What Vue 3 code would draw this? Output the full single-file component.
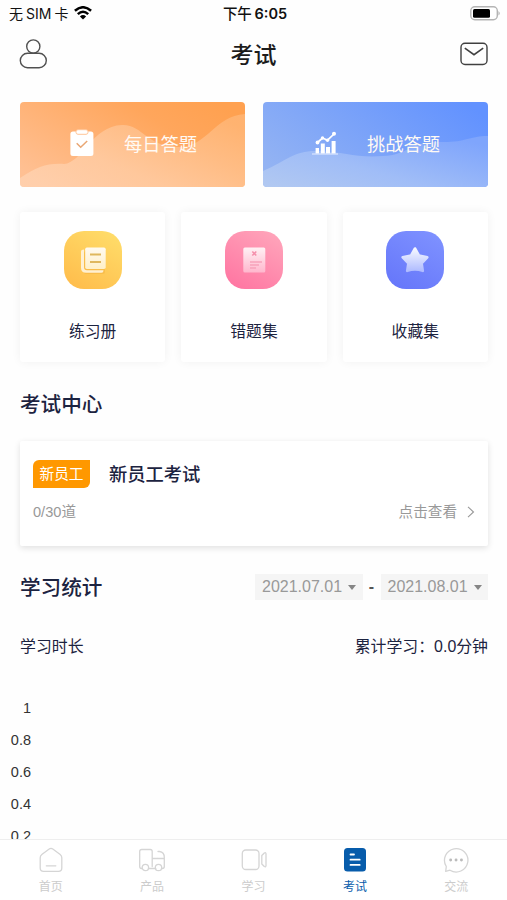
<script setup>
const axisLabels = ['1', '0.8', '0.6', '0.4', '0.2']
</script>

<template>
  <div class="screen">
    <div class="status">
      <div class="carrier">
        <span class="carrier-name">无<span class="sim">SIM</span>卡</span>
        <svg width="18" height="14" viewBox="0 0 18 14">
          <g fill="none" stroke="#000" stroke-width="2.5">
            <path d="M.9 4.8Q9-2.3 17.1 4.8" />
            <path d="M3.8 8.1Q9 3.3 14.2 8.1" />
          </g>
          <path d="M5.9 10.4Q9 7.7 12.1 10.4L9 13.5Z" fill="#000" />
        </svg>
      </div>
      <div class="clock"><span>下午</span> 6:05</div>
      <svg class="battery" width="31" height="16" viewBox="0 0 31 16">
        <rect x=".8" y=".7" width="26.500" height="13" rx="4" fill="#fff" stroke="#b4b4b4" stroke-width="1.400" />
        <rect x="3" y="2.900" width="17" height="8.800" rx="1.500" fill="#000" />
        <path d="M28.500 4.900q2.400 2.300 0 4.600z" fill="#aaa" />
      </svg>
    </div>

    <header class="header">
      <svg width="28" height="30" viewBox="0 0 28 30" fill="none" stroke="#505050" stroke-width="1.4">
        <circle cx="14.300" cy="7.500" r="6.600" />
        <rect x="1.300" y="14.300" width="26" height="14.400" rx="7.200" />
      </svg>
      <h1>考试</h1>
      <svg width="28" height="24" viewBox="0 0 28 24" fill="none" stroke="#404040" stroke-width="1.4">
        <rect x="1" y="1.300" width="26" height="21.200" rx="4" />
        <path d="M4.800 6.200 14 12.700l9.200-6.500" stroke-width="1.600" />
      </svg>
    </header>

    <main class="content">
      <section class="banners">
        <div class="banner">
          <svg class="backdrop" viewBox="0 0 225 85" preserveAspectRatio="none">
            <defs>
              <linearGradient id="orange" x1="0" y1=".8" x2="1" y2=".2">
                <stop offset="0" stop-color="#ffc093" /><stop offset=".7" stop-color="#ffa65c" /><stop offset="1" stop-color="#ffa150" />
              </linearGradient>
              <linearGradient id="orangeHill" x1="0" y1="1" x2="1" y2=".2">
                <stop offset="0" stop-color="#ffdbc0" stop-opacity=".55" /><stop offset=".4" stop-color="#ffd3b0" stop-opacity=".65" /><stop offset="1" stop-color="#ffb778" stop-opacity=".8" />
              </linearGradient>
            </defs>
            <path d="M0 0H225V85H0z" fill="url(#orange)" />
            <path d="M0 76C17 65 27 61 44 62C62 61 72 24 102 23C122 22 127 45 158 45C188 45 194 14 225 12V85H0z" fill="url(#orangeHill)" />
          </svg>
          <svg class="banner-icon" width="26" height="28" viewBox="0 0 26 28">
            <rect x="1.400" y="2.500" width="23" height="24.500" rx="2.500" fill="#fff" />
            <rect x="7" y=".7" width="12" height="4.600" rx="2" fill="#fff" stroke="#ffc598" stroke-width="1" />
            <path d="m7.700 14.200 4 4L18.200 12" fill="none" stroke="#e9a673" stroke-width="1.500" />
          </svg>
          <span class="banner-text">每日答题</span>
        </div>
        <div class="banner">
          <svg class="backdrop" viewBox="0 0 225 85" preserveAspectRatio="none">
            <defs>
              <linearGradient id="blue" x1="0" y1=".7" x2="1" y2=".2">
                <stop offset="0" stop-color="#93b3f3" /><stop offset="1" stop-color="#6292ff" />
              </linearGradient>
              <linearGradient id="blueHill" x1="0" y1="1" x2="1" y2=".2">
                <stop offset="0" stop-color="#b2c9f1" /><stop offset=".45" stop-color="#a0bdf7" /><stop offset="1" stop-color="#7fa5fc" />
              </linearGradient>
            </defs>
            <path d="M0 0H225V85H0z" fill="url(#blue)" />
            <path d="M0 69C25 58 32 48 55 49C82 50 93 56 120 54C145 53 148 39 176 40C202 41 206 34 225 34V85H0z" fill="url(#blueHill)" />
          </svg>
          <svg class="banner-icon" width="26" height="28" viewBox="0 0 26 28">
            <g fill="#fff">
              <path d="M3.600 19h3.400v5.500H3.600zM8.800 14.500h4v10h-4zM14 18h4v6.500h-4zM19.600 12h4v12.500h-4z" />
              <circle cx="5.500" cy="13.500" r="1.900" /><circle cx="10.500" cy="9" r="1.700" /><circle cx="15.500" cy="11.200" r="1.700" /><circle cx="22" cy="4.700" r="2" />
            </g>
            <path d="M5.500 13.500 10.500 9l5 2.200L22 5" fill="none" stroke="#fff" stroke-width="1.700" />
            <path d="M0 25h26" stroke="#e5edff" stroke-width="1" />
          </svg>
          <span class="banner-text">挑战答题</span>
        </div>
      </section>

      <section class="books">
        <div class="book">
          <svg width="58" height="58" viewBox="0 0 58 58">
            <defs>
              <linearGradient id="yellow" x1=".2" y1="1" x2=".8" y2="0"><stop stop-color="#ffbd4c" /><stop offset="1" stop-color="#ffdc69" /></linearGradient>
              <linearGradient id="paper" x1="0" y1="0" x2="0" y2="1"><stop stop-color="#fffaf0" /><stop offset="1" stop-color="#fff0c8" /></linearGradient>
            </defs>
            <rect width="58" height="58" rx="20" fill="url(#yellow)" />
            <rect x="20" y="20" width="21" height="23" rx="2" fill="#e99a28" opacity=".25" />
            <path d="M20 18.500q-3 .1-3 2.200v16q0 5 5 5h15.500q2 0 2-2.500H23q-3 0-3-3z" fill="#fff0d1" />
            <rect x="21.200" y="16.500" width="20.500" height="21.500" rx="1.700" fill="url(#paper)" />
            <path d="M26 23.500h11M26 31h11" stroke="#dfb75d" stroke-width="1.800" />
          </svg>
          <span>练习册</span>
        </div>
        <div class="book">
          <svg width="58" height="58" viewBox="0 0 58 58">
            <defs>
              <linearGradient id="pink" x1=".2" y1="1" x2=".8" y2="0"><stop stop-color="#ff76a2" /><stop offset="1" stop-color="#ffa4ba" /></linearGradient>
              <linearGradient id="sheet" x1="0" y1="0" x2="0" y2="1"><stop stop-color="#fff1f4" /><stop offset="1" stop-color="#ffb7cd" /></linearGradient>
            </defs>
            <rect width="58" height="58" rx="20" fill="url(#pink)" />
            <rect x="18.300" y="16.500" width="22" height="25" rx="1.500" fill="url(#sheet)" />
            <path d="m27.300 20.500 4 4m0-4-4 4" stroke="#f590ac" stroke-width="1.600" />
            <path d="M25 31h12M25 34h9M25 37h6" stroke="#f7a3bb" stroke-width="1.300" />
          </svg>
          <span>错题集</span>
        </div>
        <div class="book">
          <svg width="58" height="58" viewBox="0 0 58 58">
            <defs>
              <linearGradient id="violet" x1=".2" y1="1" x2=".8" y2="0"><stop stop-color="#6677fa" /><stop offset="1" stop-color="#7e91ff" /></linearGradient>
              <linearGradient id="star" x1="0" y1="0" x2="0" y2="1"><stop stop-color="#f6f8ff" /><stop offset="1" stop-color="#b0bcff" /></linearGradient>
            </defs>
            <rect width="58" height="58" rx="20" fill="url(#violet)" />
            <path d="m29 17.500 3.900 7 8.400 1.800-5.700 6 1.200 7.600q-4-1.500-7.800-1.500t-7.800 1.500l1.200-7.600-5.700-6 8.400-1.800z" fill="url(#star)" stroke="url(#star)" stroke-width="2.600" stroke-linejoin="round" />
          </svg>
          <span>收藏集</span>
        </div>
      </section>

      <h2 class="center-title">考试中心</h2>

      <section class="exam">
        <div class="exam-top"><span class="tag">新员工</span><h3>新员工考试</h3></div>
        <div class="exam-bottom">
          <span>0/30道</span>
          <span class="view">点击查看
            <svg width="8" height="12" viewBox="0 0 8 12" fill="none" stroke="#999" stroke-width="1.100"><path d="m1 .8 5.500 5.200L1 11.200" /></svg>
          </span>
        </div>
      </section>

      <section class="stats-head">
        <h2>学习统计</h2>
        <div class="range">
          <span class="date">2021.07.01<i></i></span>
          <b>-</b>
          <span class="date">2021.08.01<i></i></span>
        </div>
      </section>
      <section class="duration"><span>学习时长</span><span>累计学习：0.0分钟</span></section>
      <section class="axis"><span v-for="label in axisLabels" :key="label">{{ label }}</span></section>
    </main>

    <nav class="tabs">
      <div class="tab">
        <svg width="26" height="26" viewBox="0 0 26 26"><path d="M3.800 7.500 11.200 2q1.800-1.300 3.600 0l7.400 5.500q1.600 1.200 1.600 3.200V21q0 3.300-3.300 3.300h-15Q2.200 24.300 2.200 21V10.700q0-2 1.600-3.200zM8.300 18.800h9.500" /></svg>
        <span>首页</span>
      </div>
      <div class="tab">
        <svg width="26" height="26" viewBox="0 0 26 26"><path d="M3 21.500H2.500Q.7 21.500.7 19.500V4.500Q.7 2.500 2.700 2.500h8.500q2 0 2 2v15M9.700 21.500h7M13.200 11.500h5M19 4.500h1.500q4.800.5 4.800 6v9q0 2-2 2M18.500 11.500h6.800" /><circle cx="6.400" cy="20.500" r="3.200" /><circle cx="19.500" cy="20.500" r="3.200" /></svg>
        <span>产品</span>
      </div>
      <div class="tab">
        <svg width="26" height="26" viewBox="0 0 26 26"><rect x="1.300" y="3" width="16.700" height="19.500" rx="3.500" /><path d="M20.800 8.500 23.300 6q1.700-1 1.700 1v11.500q0 1.900-1.700 1l-2.500-2.500z" /></svg>
        <span>学习</span>
      </div>
      <div class="tab active">
        <svg width="26" height="26" viewBox="0 0 26 26"><rect class="solid" x="2" y="1" width="22" height="23.400" rx="3.500" /><path class="lines" d="M8.500 7.500h3.500M8.500 12.700h9.200M8.500 17.900h9.200" /></svg>
        <span>考试</span>
      </div>
      <div class="tab">
        <svg width="26" height="26" viewBox="0 0 26 26"><path d="M3.300 19.500A11.700 11.700 0 1 1 7 23.200L2.700 24.300z" /><path class="dots" d="M7.600 13h.1M13 13h.1M18.400 13h.1" /></svg>
        <span>交流</span>
      </div>
    </nav>
  </div>
</template>

<style>
body { background: #fff; overflow: hidden; }
</style>

<style scoped>
* { box-sizing: border-box; }
.screen { width: 507px; height: 900px; display: flex; flex-direction: column; overflow: hidden; background: #fefefe; color: #1c2340; font-family: "Liberation Sans", "Noto Sans CJK SC", sans-serif; font-size: 16px; }
svg { display: block; flex-shrink: 0; }
h1, h2, h3 { margin: 0; font-weight: 500; font-family: "Noto Sans CJK SC", sans-serif; }
.status { height: 27px; flex: none; display: grid; grid-template-columns: 1fr auto 1fr; align-items: center; padding: 0 6px 0 9px; color: #111; }
.carrier { display: flex; gap: 6px; align-items: center; }
.carrier svg { margin-top: -2px; }
.carrier-name { font: 14px/20px Inter, "Noto Sans CJK SC", sans-serif; white-space: nowrap; }
.sim { margin: 0 3px; }
.clock { font: 600 14.500px/20px Inter, "Noto Sans CJK SC", sans-serif; white-space: pre; }
.clock span { font-size: 14.500px; font-weight: 500; margin-right: -1px; }
.battery { justify-self: end; }
.header { height: 54px; flex: none; display: flex; align-items: center; justify-content: space-between; padding: 0 19px; }
h1 { margin-top: -3px; font-size: 23px; line-height: 32px; color: #1c1c1c; }
.content { flex: 1; min-height: 0; overflow: hidden; padding: 21px 19px 0 20px; }
.banners { display: flex; gap: 18px; height: 85px; }
.banner { position: relative; flex: 1; display: flex; align-items: center; padding: 0 0 3px 49px; border-radius: 4px; overflow: hidden; }
.backdrop { position: absolute; inset: 0; width: 100%; height: 100%; }
.banner-icon, .banner-text { position: relative; }
.banner-text { margin-left: 29px; color: #fffaf4; font: 18.300px/26px "Noto Sans CJK SC", sans-serif; }
.books { margin-top: 25px; display: flex; gap: 16px; height: 150px; }
.book { flex: 1; display: flex; flex-direction: column; align-items: center; padding-top: 19px; border-radius: 3px; background: #fff; box-shadow: 0 0 10px rgba(0, 0, 0, .055); }
.book span { margin-top: 32px; line-height: 22px; font-size: 15.800px; }
h2 { font-size: 20.600px; line-height: 30px; }
.center-title { margin-top: 26px; }
.exam { margin-top: 23px; height: 105px; padding: 18px 13px 0; background: #fff; border-radius: 2px; box-shadow: 0 2px 6px rgba(0, 0, 0, .12); }
.exam-top { display: flex; align-items: center; height: 30px; }
.tag { width: 57px; height: 28px; background: #ff9800; color: #fff; border-radius: 6px 0 6px 0; text-align: center; font-size: 14.700px; line-height: 29px; }
h3 { margin: -2px 0 0 19px; font-size: 18.300px; line-height: 26px; }
.exam-bottom { display: flex; justify-content: space-between; margin-top: 12px; line-height: 22px; font-size: 14.600px; color: #999; }
.view { display: flex; align-items: center; gap: 10px; }
.stats-head { display: flex; align-items: center; justify-content: space-between; height: 30px; margin-top: 26px; }
.stats-head h2 { margin-top: -2px; }
.range { display: flex; align-items: center; }
.range b { width: 18px; text-align: center; font-size: 16px; font-weight: 700; color: #555; }
.date { display: flex; align-items: center; gap: 6px; width: 107.500px; height: 26px; padding-left: 7px; background: #f5f5f5; color: #999; font-size: 16px; white-space: nowrap; }
.date i { border: 4.500px solid transparent; border-top: 5px solid #858585; border-bottom: 0; }
.duration { display: flex; justify-content: space-between; margin-top: 33px; line-height: 24px; font-size: 15.900px; }
.axis { width: 42px; margin: 33px 0 0 -20px; padding-right: 11px; display: flex; flex-direction: column; color: #333; font: 14.500px/32px "Liberation Sans", sans-serif; text-align: right; }
.tabs { height: 61px; flex: none; display: flex; border-top: 1px solid #eee; background: #fff; }
.tab { flex: 1; display: flex; flex-direction: column; align-items: center; padding-top: 7px; color: #ccc; }
.tab span { margin-top: 5px; font-size: 12px; line-height: 18px; }
.tab svg { fill: none; stroke: #d5d5d5; stroke-width: 1.300; stroke-linecap: round; stroke-linejoin: round; }
.tab .dots { stroke: #bbb; stroke-width: 2.800; }
.tab .solid { fill: #075cab; stroke: none; }
.tab .lines { stroke: #fff; stroke-width: 1.800; }
.tab.active { color: #075cab; }
</style>
